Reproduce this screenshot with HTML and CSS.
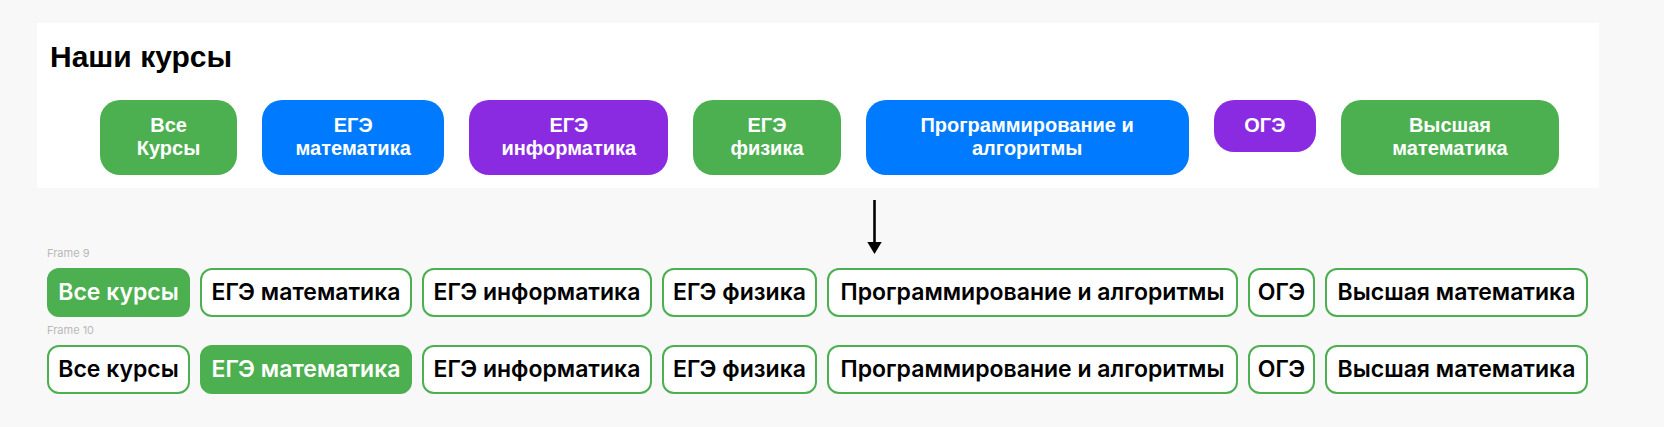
FILE: index.html
```html
<!DOCTYPE html>
<html lang="ru">
<head>
<meta charset="utf-8">
<title>Наши курсы</title>
<meta name="viewport" content="width=device-width, initial-scale=1">
<link rel="stylesheet" href="styles.css">
</head>
<body>
<main class="board">
  <section class="panel">
    <h1 class="panel-title">Наши курсы</h1>
    <div class="pills">
      <button class="pill green w-all" type="button">Все<br>Курсы</button>
      <button class="pill blue w-math" type="button">ЕГЭ<br>математика</button>
      <button class="pill purple w-info" type="button">ЕГЭ<br>информатика</button>
      <button class="pill green w-phys" type="button">ЕГЭ<br>физика</button>
      <button class="pill blue w-prog" type="button">Программирование и<br>алгоритмы</button>
      <button class="pill purple w-oge" type="button">ОГЭ</button>
      <button class="pill green w-high" type="button">Высшая<br>математика</button>
    </div>
  </section>

  <div class="arrow">
    <svg width="15" height="54" viewBox="0 0 15 54" aria-hidden="true">
      <path d="M7.5 0V44" stroke="#000" stroke-width="2.6"/>
      <path d="M0.3 42H14.7L7.5 54Z" fill="#000"/>
    </svg>
  </div>

  <section class="frame">
    <h2 class="frame-label">Frame 9</h2>
    <div class="tags">
      <button class="tag active" type="button">Все курсы</button>
      <button class="tag" type="button">ЕГЭ математика</button>
      <button class="tag" type="button">ЕГЭ информатика</button>
      <button class="tag" type="button">ЕГЭ физика</button>
      <button class="tag" type="button">Программирование и алгоритмы</button>
      <button class="tag" type="button">ОГЭ</button>
      <button class="tag" type="button">Высшая математика</button>
    </div>
  </section>

  <section class="frame">
    <h2 class="frame-label">Frame 10</h2>
    <div class="tags">
      <button class="tag" type="button">Все курсы</button>
      <button class="tag active" type="button">ЕГЭ математика</button>
      <button class="tag" type="button">ЕГЭ информатика</button>
      <button class="tag" type="button">ЕГЭ физика</button>
      <button class="tag" type="button">Программирование и алгоритмы</button>
      <button class="tag" type="button">ОГЭ</button>
      <button class="tag" type="button">Высшая математика</button>
    </div>
  </section>
</main>
</body>
</html>
```

FILE: styles.css
```css
* {
  box-sizing: border-box;
}

body {
  margin: 0;
  background: #f8f8f8;
  color: #000;
}

.board {
  padding: 23px 65px 32px 37px;
}

.panel {
  padding: 16px 40px 13px 13px;
  background: #fff;
  font-family: "Liberation Sans", Arial, sans-serif;
}

.panel-title {
  margin: 0 0 25px;
  font-size: 30px;
  line-height: 36px;
  font-weight: 700;
}

.pills {
  display: flex;
  align-items: flex-start;
  gap: 25px;
  padding-left: 50px;
}

.pill {
  min-width: 0;
  padding: 14px 0 15px;
  border: 0;
  border-radius: 20px;
  color: #fff;
  font: 700 20px/23px "Liberation Sans", Arial, sans-serif;
  text-align: center;
  white-space: nowrap;
  cursor: pointer;
}

.green { background: #4caf50; }
.blue { background: #007bff; }
.purple { background: #8a2be2; }

.w-all { flex: 137 1 0; }
.w-math { flex: 182 1 0; }
.w-info { flex: 199 1 0; }
.w-phys { flex: 147 1 0; }
.w-prog { flex: 323 1 0; }
.w-oge { flex: 102 1 0; }
.w-high { flex: 218 1 0; }

.arrow {
  display: flex;
  justify-content: center;
  margin: 12px 0 -8px;
  padding-left: 113px;
}

.frame {
  padding: 0 11px 0 10px;
  font-family: Inter, sans-serif;
}

.frame + .frame {
  margin-top: 6px;
}

.frame-label {
  margin: 0 0 8px;
  color: #b8b8b8;
  font-size: 11px;
  line-height: 14px;
  font-weight: 400;
}

.tags {
  display: grid;
  grid-template-columns: 143fr 212fr 230fr 155fr 411fr 67fr 263fr;
  gap: 10px;
}

.tag {
  padding: 8px 0;
  border: 2px solid #4caf50;
  border-radius: 12px;
  background: #fff;
  color: #000;
  font: 600 23px/29px Inter, sans-serif;
  text-align: center;
  white-space: nowrap;
  cursor: pointer;
}

.tag.active {
  background: #4caf50;
  color: #fff;
}
```
